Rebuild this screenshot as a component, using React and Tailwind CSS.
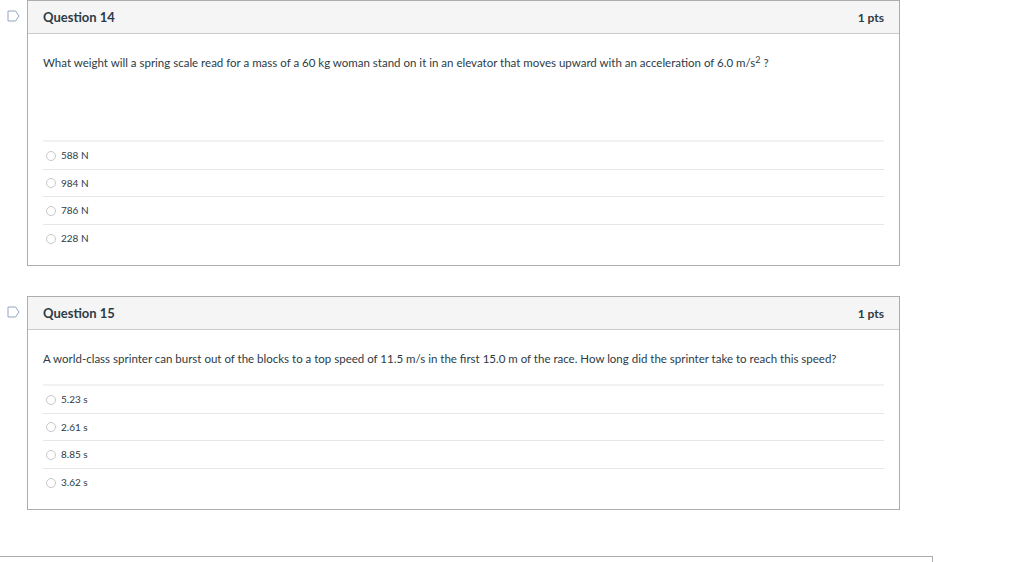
import React from "react";

const questions = [
  {
    num: 14,
    pts: 1,
    text: (
      <>
        What weight will a spring scale read for a mass of a 60 kg woman stand on it in an elevator that moves upward with an acceleration of 6.0 m/s<sup className="text-[9px]">2</sup> ?
      </>
    ),
    bodyHeight: "h-[106px]",
    answers: ["588 N", "984 N", "786 N", "228 N"],
  },
  {
    num: 15,
    pts: 1,
    text: "A world-class sprinter can burst out of the blocks to a top speed of 11.5 m/s in the first 15.0 m of the race.  How long did the sprinter take to reach this speed?",
    bodyHeight: "h-[54px]",
    answers: ["5.23 s", "2.61 s", "8.85 s", "3.62 s"],
  },
];

function Flag() {
  return (
    <svg width="13" height="12" viewBox="0 0 13 12" className="mt-[10px] ml-[7px]">
      <path d="M1 1 H8.5 L12 6 L8.5 11 H1 Z" fill="none" stroke="#8fa6bd" strokeWidth="1" />
    </svg>
  );
}

function Question({ q }) {
  return (
    <div className="flex">
      <div className="w-[27px] shrink-0">
        <Flag />
      </div>
      <div className="w-[873px] border border-[#adadad] bg-white">
        <div className="h-[33px] pt-[2px] bg-[#f5f5f5] border-b border-[#c7cdd1] flex items-center justify-between px-[15px]">
          <span className="text-[13px] font-bold text-[#2d3b45]">Question {q.num}</span>
          <span className="text-[12px] font-bold text-[#2d3b45]">{q.pts} pts</span>
        </div>
        <div className="px-[15px]">
          <div className={`${q.bodyHeight} pt-[20px] text-[11.5px] text-[#2d3b45]`}>{q.text}</div>
          <div className="border-t-2 border-[#f2f2f2] pb-[13px]">
            {q.answers.map((a, i) => (
              <div
                key={a}
                className={`h-[27.5px] flex items-center gap-[5px] pl-[3px] pt-px text-[10px] text-[#2d3b45] ${i < q.answers.length - 1 ? "border-b border-[#e6e6e6]" : ""}`}
              >
                <span className="w-[10px] h-[10px] rounded-full border border-[#c8c8c8] bg-white" />
                <span>{a}</span>
              </div>
            ))}
          </div>
        </div>
      </div>
    </div>
  );
}

export default function App() {
  return (
    <div className="w-[1024px] h-[562px] bg-white overflow-hidden" style={{ fontFamily: "Lato, 'Liberation Sans', sans-serif" }}>
      <div className="flex flex-col gap-[30px]">
        {questions.map((q) => (
          <Question key={q.num} q={q} />
        ))}
      </div>
      <div className="mt-[46px] w-[933px] h-[20px] border-t border-r border-[#adadad]" />
    </div>
  );
}
